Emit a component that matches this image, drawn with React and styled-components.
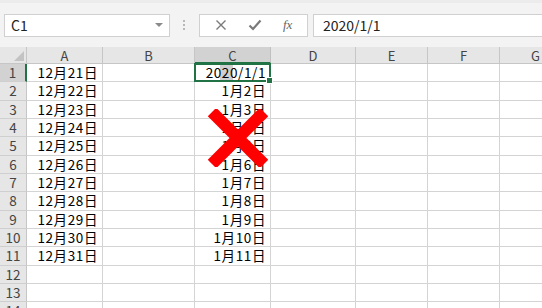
import React from 'react'
import styled, { createGlobalStyle } from 'styled-components'

const GlobalStyle = createGlobalStyle`
  body {
    margin: 0;
    background: #ffffff;
    font-family: "Noto Sans CJK JP", "Noto Sans", sans-serif;
    overflow: hidden;
  }
`

const GREEN = '#217346'
const GRID = '#d4d4d4'

const Page = styled.div`
  position: relative;
  width: 542px;
  height: 308px;
  overflow: hidden;
  background: #f3f3f3;
`

const Toolbar = styled.div`
  display: flex;
  align-items: center;
  height: 47px;
  padding: 0 0 0 4px;
  box-sizing: border-box;
  border-top: 3px solid #ececec;
`

const NameBox = styled.div`
  display: flex;
  align-items: center;
  justify-content: space-between;
  width: 166px;
  height: 23px;
  box-sizing: border-box;
  background: #fff;
  border: 1px solid #d0d0d0;
  padding: 0 6px 0 6px;
  font-size: 14px;
  color: #222;
`

const Caret = styled.span`
  width: 0;
  height: 0;
  border-left: 4px solid transparent;
  border-right: 4px solid transparent;
  border-top: 4px solid #8a8a8a;
`

const Grip = styled.div`
  display: flex;
  flex-direction: column;
  gap: 2px;
  margin: 0 14px 0 13px;
  span {
    width: 2px;
    height: 2px;
    background: #b8b8b8;
  }
`

const Buttons = styled.div`
  display: flex;
  align-items: center;
  justify-content: space-around;
  width: 109px;
  height: 23px;
  box-sizing: border-box;
  background: #fff;
  border: 1px solid #d0d0d0;
  padding: 0 4px;
  color: #7a7a7a;
`

const Fx = styled.span`
  font-family: "Liberation Serif", serif;
  font-style: italic;
  font-size: 13px;
  color: #666;
`

const Formula = styled.div`
  flex: 1;
  display: flex;
  align-items: center;
  height: 23px;
  margin-left: 5px;
  box-sizing: border-box;
  background: #fff;
  border: 1px solid #d0d0d0;
  border-right: none;
  padding-left: 9px;
  font-size: 14px;
  color: #222;
`

const Sheet = styled.div`
  display: grid;
  grid-template-columns: 27px 76px 92px 76px 85px 72px 72px 72px;
  grid-template-rows: 17px;
  grid-auto-rows: 18.33px;
  background: #fff;
  width: 572px;
`

const Corner = styled.div`
  position: relative;
  background: #e6e6e6;
  border-right: 1px solid #c6c6c6;
  border-bottom: 1px solid #c6c6c6;
  &::after {
    content: '';
    position: absolute;
    right: 2px;
    bottom: 2px;
    border-left: 10px solid transparent;
    border-bottom: 10px solid #c3c3c3;
  }
`

const ColHead = styled.div`
  display: flex;
  align-items: center;
  justify-content: center;
  background: ${p => (p.$active ? '#d2d2d2' : '#e6e6e6')};
  border-right: 1px solid ${p => (p.$active ? '#c0c0c0' : '#c6c6c6')};
  border-bottom: ${p => (p.$active ? `2px solid ${GREEN}` : '1px solid #c6c6c6')};
  box-sizing: border-box;
  font-size: 13px;
  color: #444;
  line-height: 1;
  padding-top: 1px;
`

const RowHead = styled.div`
  display: flex;
  align-items: center;
  justify-content: center;
  background: ${p => (p.$active ? '#d2d2d2' : '#e6e6e6')};
  border-right: ${p => (p.$active ? `2px solid ${GREEN}` : '1px solid #c6c6c6')};
  border-bottom: 1px solid #cfcfcf;
  box-sizing: border-box;
  font-size: 13.5px;
  color: #444;
  line-height: 1;
`

const Cell = styled.div`
  position: relative;
  display: flex;
  align-items: center;
  justify-content: flex-end;
  padding-right: 4px;
  border-right: 1px solid ${GRID};
  border-bottom: 1px solid ${GRID};
  box-sizing: border-box;
  font-size: 13.5px;
  color: #000;
  line-height: 1;
  white-space: nowrap;
  letter-spacing: 0.6px;

  ${p =>
    p.$selected &&
    `
    &::before {
      content: '';
      position: absolute;
      left: 25px;
      top: 1px;
      width: 13px;
      height: 15px;
      background: #cfcfcf;
    }
    &::after {
      content: '';
      position: absolute;
      left: -1px;
      top: -1px;
      right: -1px;
      bottom: -1px;
      border: 2px solid ${GREEN};
    }
  `}
`

const CellText = styled.span`
  position: relative;
  z-index: 1;
`

const FillHandle = styled.span`
  position: absolute;
  right: -3px;
  bottom: -3px;
  width: 5px;
  height: 5px;
  background: ${GREEN};
  border: 1px solid #fff;
  z-index: 2;
`

const Cross = styled.svg`
  position: absolute;
  left: 208px;
  top: 109px;
  z-index: 5;
`

const colA = [
  '12月21日', '12月22日', '12月23日', '12月24日', '12月25日', '12月26日',
  '12月27日', '12月28日', '12月29日', '12月30日', '12月31日'
]
const colC = [
  '2020/1/1', '1月2日', '1月3日', '1月4日', '1月5日', '1月6日',
  '1月7日', '1月8日', '1月9日', '1月10日', '1月11日'
]
const letters = ['A', 'B', 'C', 'D', 'E', 'F', 'G']

export default function App() {
  const rows = Array.from({ length: 15 }, (_, i) => i + 1)

  return (
    <Page>
      <GlobalStyle />
      <Toolbar>
        <NameBox>
          C1
          <Caret />
        </NameBox>
        <Grip>
          <span />
          <span />
          <span />
        </Grip>
        <Buttons>
          <svg width="12" height="12" viewBox="0 0 12 12">
            <path d="M1.5 1.5 L10.5 10.5 M10.5 1.5 L1.5 10.5" stroke="#7a7a7a" strokeWidth="1.4" />
          </svg>
          <svg width="14" height="12" viewBox="0 0 14 12">
            <path d="M1.5 6.5 L5 10 L12.5 1.5" stroke="#7a7a7a" strokeWidth="2.2" fill="none" />
          </svg>
          <Fx>fx</Fx>
        </Buttons>
        <Formula>2020/1/1</Formula>
      </Toolbar>

      <Sheet>
        <Corner />
        {letters.map(l => (
          <ColHead key={l} $active={l === 'C'}>{l}</ColHead>
        ))}
        {rows.map(r => (
          <React.Fragment key={r}>
            <RowHead $active={r === 1}>{r}</RowHead>
            {letters.map(l => {
              let text = ''
              if (l === 'A' && colA[r - 1]) text = colA[r - 1]
              if (l === 'C' && colC[r - 1]) text = colC[r - 1]
              const sel = l === 'C' && r === 1
              return (
                <Cell key={l} $selected={sel}>
                  <CellText>{text}</CellText>
                  {sel && <FillHandle />}
                </Cell>
              )
            })}
          </React.Fragment>
        ))}
      </Sheet>

      <Cross width="60" height="58" viewBox="0 0 60 58">
        <path d="M4 3 L56 55 M56 3 L4 55" stroke="#ff0000" strokeWidth="12" />
      </Cross>
    </Page>
  )
}
